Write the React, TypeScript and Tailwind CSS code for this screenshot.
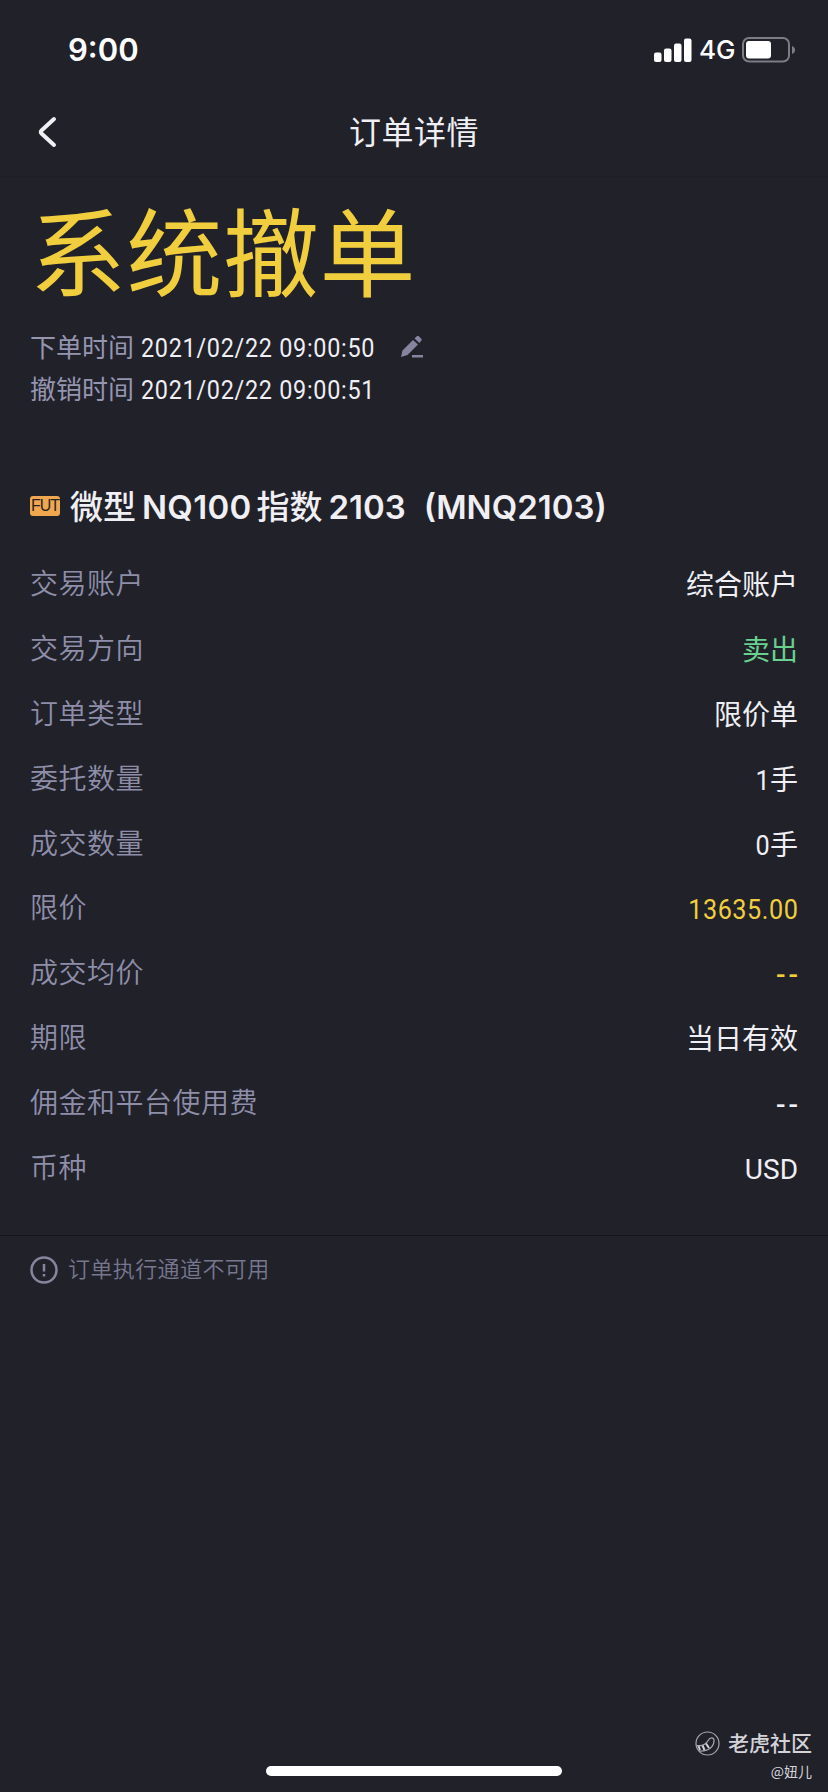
type Row = {
  label: string;
  value: string;
  unit?: string;
  color?: string;
  valueClass?: string;
};

const digits = "inline-block origin-right scale-x-90 font-[450]";
const dashes = "tracking-[3px] -mr-[3px] font-medium";

const rows: Row[] = [
  { label: "交易账户", value: "综合账户" },
  { label: "交易方向", value: "卖出", color: "text-[#69d08f]" },
  { label: "订单类型", value: "限价单" },
  { label: "委托数量", value: "1", unit: "手", valueClass: digits },
  { label: "成交数量", value: "0", unit: "手", valueClass: digits },
  { label: "限价", value: "13635.00", color: "text-[#f0ce3e]", valueClass: "inline-block origin-right scale-x-90 tracking-[0.6px] font-[450]" },
  { label: "成交均价", value: "--", color: "text-[#f0ce3e]", valueClass: dashes },
  { label: "期限", value: "当日有效" },
  { label: "佣金和平台使用费", value: "--", valueClass: dashes },
  { label: "币种", value: "USD", valueClass: "font-[450]" },
];

function StatusBar() {
  return (
    <div className="h-[88px] pl-[68px] pr-[33px] pt-[2px] flex items-center justify-between text-white">
      <span className="font-[Inter] text-[31px] font-semibold leading-none pt-[9px]">
        9:00
      </span>
      <div className="flex items-center pt-[9px]">
        <svg width="38" height="24" viewBox="0 0 38 24" fill="currentColor">
          <rect x="0" y="14.5" width="7.5" height="9.5" rx="2" />
          <rect x="10" y="10.5" width="7.5" height="13.5" rx="2" />
          <rect x="20" y="5.5" width="7.5" height="18.5" rx="2" />
          <rect x="30" y="0.5" width="7.5" height="23.5" rx="2" />
        </svg>
        <span className="ml-[7px] w-[35px] font-[Inter] text-[26px] font-[450] leading-none">
          4G
        </span>
        <svg className="ml-2" width="53" height="26" viewBox="0 0 53 26" fill="none">
          <rect x="1" y="1" width="46" height="23.5" rx="6" stroke="#7d7d83" strokeWidth="2" />
          <rect x="4" y="4" width="25" height="17.5" rx="3" fill="white" />
          <path d="M50 9c2 .7 3 2.200 3 4s-1 3.300-3 4z" fill="#7d7d83" />
        </svg>
      </div>
    </div>
  );
}

function Header() {
  return (
    <div className="h-[89px] border-b border-[#1e1e26] px-9 grid grid-cols-[40px_1fr_40px] items-center">
      <svg width="22" height="32" viewBox="0 0 22 32" fill="none">
        <path
          d="M18 3L5.500 14.500Q4 16 5.500 17.500L18 29"
          stroke="#efeff4"
          strokeWidth="4"
          strokeLinecap="round"
        />
      </svg>
      <h1 className="pb-[5px] text-center text-[32px] leading-none tracking-[0.5px] text-[#efeff4]">
        订单详情
      </h1>
    </div>
  );
}

function TimeLine({ label, time, editable }: { label: string; time: string; editable?: boolean }) {
  return (
    <div className="h-[42px] flex items-center text-[26px] leading-none">
      <span className="w-[111px] pb-[2px] text-[#9595b0]">{label}</span>
      <span className="w-[235px] pt-[2px] whitespace-nowrap origin-left scale-x-90 font-[Roboto] font-[450] tracking-[0.8px] text-[#efeff4]">
        {time}
      </span>
      {editable && (
        <svg className="ml-6" width="24" height="24" viewBox="0 0 24 24" fill="#8585a0">
          <path d="M1 22l1.500-6.500L13 5l5 4.500L7.500 20z" />
          <path d="M14.500 3.500l2.300-2.300q1-.8 2 0l2.500 2.500q.9 1 0 2L19.300 8z" />
          <rect x="12" y="20" width="11" height="2.500" />
        </svg>
      )}
    </div>
  );
}

function Summary() {
  return (
    <div className="px-[30px]">
      <div className="h-[148px] pb-[6px] flex items-center text-[96px] leading-none tracking-[0.5px] text-[#f0ce3e]">
        系统撤单
      </div>
      <div className="mt-[1px]">
        <TimeLine label="下单时间" time="2021/02/22 09:00:50" editable />
        <TimeLine label="撤销时间" time="2021/02/22 09:00:51" />
      </div>
    </div>
  );
}

function Contract() {
  return (
    <div className="mt-[67px] px-[30px] h-[60px] flex items-center text-[#efeff4]">
      <span className="w-[30px] h-5 mb-[2px] rounded-[3px] bg-[#efa850] text-[#2b2320] font-['Liberation_Sans'] text-[16px] tracking-[-1px] leading-none flex items-center justify-center">
        FUT
      </span>
      <h2 className="ml-[10px] flex items-center text-[33px] font-medium leading-none whitespace-pre">
        <span className="pb-[3px]">微型</span>
        <span className="ml-[6px] font-[Inter] font-semibold tracking-[0.3px]">NQ100</span>
        <span className="ml-[5px] pb-[3px]">指数</span>
        <span className="ml-[6px] font-[Inter] font-semibold">2103</span>
        <span className="ml-[18px] font-[Inter] font-semibold">(MNQ2103)</span>
      </h2>
    </div>
  );
}

function Details() {
  return (
    <dl className="mt-[14px] px-[30px] h-[685px] border-b border-[#15151c]">
      {rows.map(({ label, value, unit, color = "text-[#efeff4]", valueClass = "" }) => (
        <div key={label} className="h-[64.900px] flex items-center justify-between text-[28px] leading-none">
          <dt className="pb-[3px] text-[#8e8ea9] font-[350] tracking-[0.500px]">{label}</dt>
          <dd className={`pt-[5px] whitespace-nowrap font-[Roboto,'Noto_Sans_CJK_SC',sans-serif] ${color}`}>
            <span className={valueClass}>{value}</span>
            {unit}
          </dd>
        </div>
      ))}
    </dl>
  );
}

function Notice() {
  return (
    <div className="h-[66px] px-[30px] flex items-center text-[#77778f]">
      <svg className="mt-[1px]" width="28" height="28" viewBox="0 0 28 28" fill="none" stroke="#85859e" strokeWidth="2.500">
        <circle cx="14" cy="14" r="12.500" />
        <path d="M14 8v7.500M14 18v2.500" />
      </svg>
      <span className="ml-[10px] pb-[5px] text-[22px] font-[350] leading-none tracking-[0.400px]">
        订单执行通道不可用
      </span>
    </div>
  );
}

function Footer() {
  return (
    <div className="mt-auto">
      <div className="pr-4 flex flex-col items-end">
        <div className="flex items-center gap-2 text-[#d3d3d8]">
          <svg width="25" height="25" viewBox="0 0 25 25" fill="none" stroke="#a5a5ab">
            <circle cx="12.500" cy="12.500" r="11.500" strokeWidth="1.200" />
            <path d="M1.500 14.500q8 1.500 12-5.500c1.500-3 5.500-3 5.500 0.500c0 6-5 11-15 10.500" strokeWidth="1.300" />
            <path d="M3.500 15l1.500 4M7.500 14.500l2 4.500M11 12.500l3 4.500" stroke="#d3d3d8" strokeWidth="2" />
          </svg>
          <span className="pb-[2px] text-[21px] font-medium leading-none">老虎社区</span>
        </div>
        <div className="mt-[8px] pb-[1px] text-[14px] leading-none text-[#d3d3d8]">@妞儿</div>
      </div>
      <div className="mt-[-13px] mb-[16px] mx-auto w-[296px] h-[10px] rounded-full bg-white" />
    </div>
  );
}

export default function App() {
  return (
    <div className="w-[828px] h-[1792px] overflow-hidden flex flex-col bg-[#21212a] font-['Noto_Sans_CJK_SC',sans-serif]">
      <StatusBar />
      <Header />
      <Summary />
      <Contract />
      <Details />
      <Notice />
      <Footer />
    </div>
  );
}
